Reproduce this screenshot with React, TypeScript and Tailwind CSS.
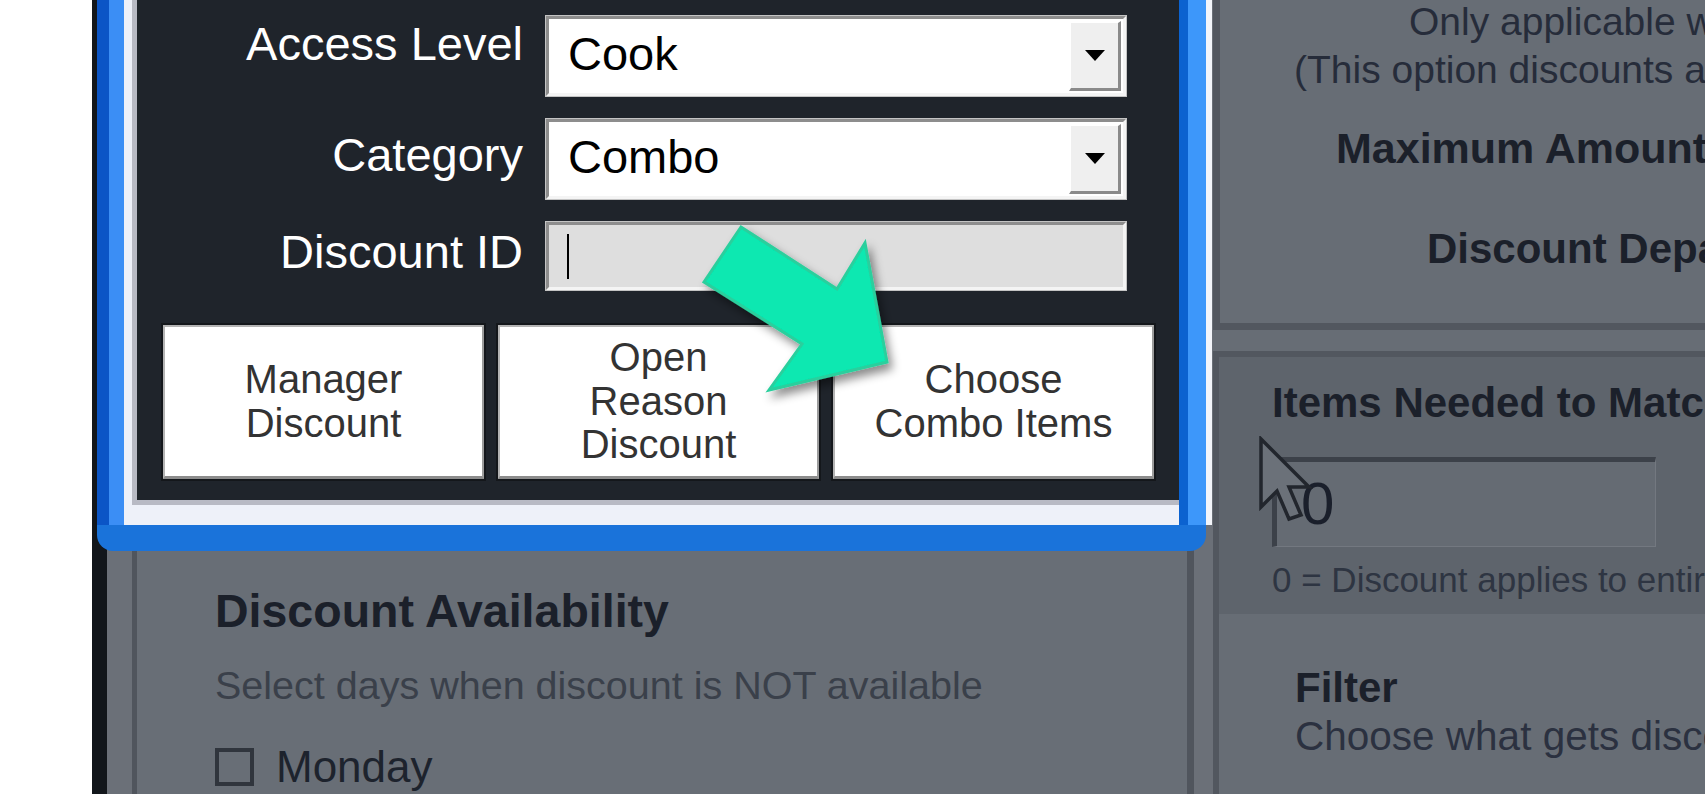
import React from 'react';

const dlgFont = "font-['Liberation_Sans',Arial,sans-serif]";

const Select: React.FC<{ value: string }> = ({ value }) => (
  <div className="w-[580px] h-[80px] flex bg-white p-[2px] border-[3px] border-t-[#8d8d8d] border-l-[#8d8d8d] border-b-[#f4f4f4] border-r-[#f4f4f4] shadow-[0_0_0_1px_#c4c4c4]">
    <div className="flex-1 flex items-center pl-[17px] pb-[3px] text-[47px] text-black">{value}</div>
    <div className="w-[52px] flex items-center justify-center bg-[#efefef] border-t-2 border-l-2 border-t-white border-l-white border-b-[3px] border-r-[3px] border-b-[#8a8a8a] border-r-[#8a8a8a]">
      <svg width="20" height="11" viewBox="0 0 20 11">
        <path d="M0 0H20L10 11Z" fill="#000" />
      </svg>
    </div>
  </div>
);

const DlgButton: React.FC<{ lines: string[] }> = ({ lines }) => (
  <div className="w-[321px] h-[154px] flex flex-col items-center justify-center bg-white border-2 border-[#b4b4b4] border-b-[3px] border-b-[#8c8c8c] border-r-[#9c9c9c] ring-2 ring-[#14171b] text-[40px] leading-[43.5px] text-[#333333]">
    {lines.map((l) => (
      <span key={l}>{l}</span>
    ))}
  </div>
);

const Row: React.FC<{ label: string; labelClass: string; children: React.ReactNode; className?: string }> = ({
  label,
  labelClass,
  children,
  className,
}) => (
  <div className={`flex items-start ${className ?? ''}`}>
    <div className={`w-[386px] text-right text-[47px] text-white ${labelClass}`}>{label}</div>
    <div className="ml-[23px]">{children}</div>
  </div>
);

const Dialog: React.FC = () => (
  <div className="absolute left-[97px] top-0 w-[1115px] h-[551px] flex flex-col">
    <div className="h-[525px] flex">
      <div className="w-[12px] bg-[#0b55c6]" />
      <div className="w-[15px] bg-[#3b8ef5]" />
      <div className="flex-1 bg-[#eef1f9] pl-[8px] pb-[20px]">
        <div className="h-full bg-[#1f242b] border-l-[5px] border-b-[5px] border-[#b8bac4] pt-[16px]">
          <Row label="Access Level" labelClass="mt-[-7px]">
            <Select value="Cook" />
          </Row>
          <Row label="Category" labelClass="mt-[1px]" className="mt-[23px]">
            <Select value="Combo" />
          </Row>
          <Row label="Discount ID" labelClass="mt-[-5px]" className="mt-[23px]">
            <div className="w-[580px] h-[68px] flex items-center pl-[18px] bg-[#dedede] border-[3px] border-t-[#8d8d8d] border-l-[#8d8d8d] border-b-[#f4f4f4] border-r-[#f4f4f4] shadow-[0_0_0_1px_#c4c4c4]">
              <div className="w-[2px] h-[45px] bg-black" />
            </div>
          </Row>
          <div className="mt-[35px] pl-[26px] flex gap-[14px]">
            <DlgButton lines={['Manager', 'Discount']} />
            <DlgButton lines={['Open', 'Reason', 'Discount']} />
            <DlgButton lines={['Choose', 'Combo Items']} />
          </div>
        </div>
      </div>
      <div className="w-[9px] bg-[#0b62d0]" />
      <div className="w-[18px] bg-[#3d97fa]" />
      <div className="w-[6px] bg-[#f3f5fa]" />
    </div>
    <div className="h-[26px] w-[1109px] bg-[#1a73da] rounded-b-[16px]" />
  </div>
);

const GreenArrow: React.FC = () => (
  <svg className="absolute left-[690px] top-[215px] overflow-visible" width="230" height="190" viewBox="0 0 230 190">
    <defs>
      <filter id="arrowShadow" x="-20%" y="-20%" width="150%" height="150%">
        <feDropShadow dx="4" dy="6" stdDeviation="5" floodColor="#000" floodOpacity="0.45" />
      </filter>
    </defs>
    <polygon
      points="51,12 147,74 175,28 197,147 79,175 112,129 14,67"
      fill="#07e8b1"
      stroke="#2ccf9d"
      strokeWidth="3"
      strokeLinejoin="miter"
      filter="url(#arrowShadow)"
    />
  </svg>
);

const Cursor: React.FC = () => (
  <svg className="absolute left-[1258px] top-[436px]" width="56" height="88" viewBox="0 0 56 88">
    <polygon points="3,3 3,71 19,55 31,83 43,79 31,51 51,51" fill="#6b7179" stroke="#22262d" strokeWidth="3.5" strokeLinejoin="miter" />
  </svg>
);

const LeftPanel: React.FC = () => (
  <div className="w-[1062px] shrink-0 bg-[#686e76] border-l-[5px] border-r-[7px] border-[#50555d] pl-[78px] pt-[585px] whitespace-nowrap">
    <div className="text-[46.5px] leading-[52px] font-bold text-[#1b202a]">Discount Availability</div>
    <div className="mt-[25px] text-[39.5px] leading-[46px] text-[#3a404a]">Select days when discount is NOT available</div>
    <div className="mt-[33px] flex items-center gap-[22px]">
      <div className="w-[39px] h-[38px] border-[4px] border-[#30353d]" />
      <span className="text-[44px] leading-[52px] text-[#1d232d]">Monday</span>
    </div>
  </div>
);

const RightColumn: React.FC = () => (
  <div className="w-[492px] shrink-0 flex flex-col overflow-hidden whitespace-nowrap bg-[#676d75]">
    <div className="h-[330px] shrink-0 border-l-[7px] border-b-[7px] border-[#52575f] text-[39px] leading-[48px] text-[#262c3a]">
      <div className="mt-[-2px] pl-[189px]">Only applicable when Category is Combo</div>
      <div className="pl-[74px]">(This option discounts all matching items)</div>
      <div className="pl-[116px] mt-[30px] text-[43px] font-bold text-[#1b202a]">Maximum Amount</div>
      <div className="pl-[207px] mt-[53px] text-[42px] font-bold text-[#1b202a]">Discount Department</div>
    </div>
    <div className="mt-[21px] flex-1 flex flex-col border-l-[6px] border-t-[6px] border-[#52575f]">
      <div className="h-[257px] shrink-0 bg-[#5e646c] pl-[53px] pt-[22px]">
        <div className="text-[42px] leading-[48px] font-bold text-[#1b202a]">Items Needed to Match</div>
        <div className="mt-[30px] w-[384px] h-[90px] flex items-center pl-[24px] bg-[#656b73] border-t-[5px] border-l-[5px] border-t-[#3c4149] border-l-[#3c4149] border-b border-r border-b-[#737880] border-r-[#737880] text-[60px] text-[#1a1f2b]">
          0
        </div>
        <div className="mt-[12px] text-[35px] leading-[42px] text-[#2e3542]">0 = Discount applies to entire order</div>
      </div>
      <div className="pl-[76px] pt-[50px]">
        <div className="text-[42px] leading-[48px] font-bold text-[#1b202a]">Filter</div>
        <div className="text-[40.5px] leading-[48px] text-[#2b3140]">Choose what gets discounted</div>
      </div>
    </div>
  </div>
);

const App: React.FC = () => {
  return (
    <div className={`relative w-[1705px] h-[794px] overflow-hidden bg-white flex ${dlgFont}`}>
      <div className="w-[92px] shrink-0 bg-white" />
      <div className="w-[15px] shrink-0 bg-[#12161b]" />
      <div className="w-[25px] shrink-0 bg-[#6b7078]" />
      <LeftPanel />
      <div className="w-[19px] shrink-0 bg-[#6b7078]" />
      <RightColumn />

      <Dialog />
      <GreenArrow />
      <Cursor />
    </div>
  );
};

export default App;
